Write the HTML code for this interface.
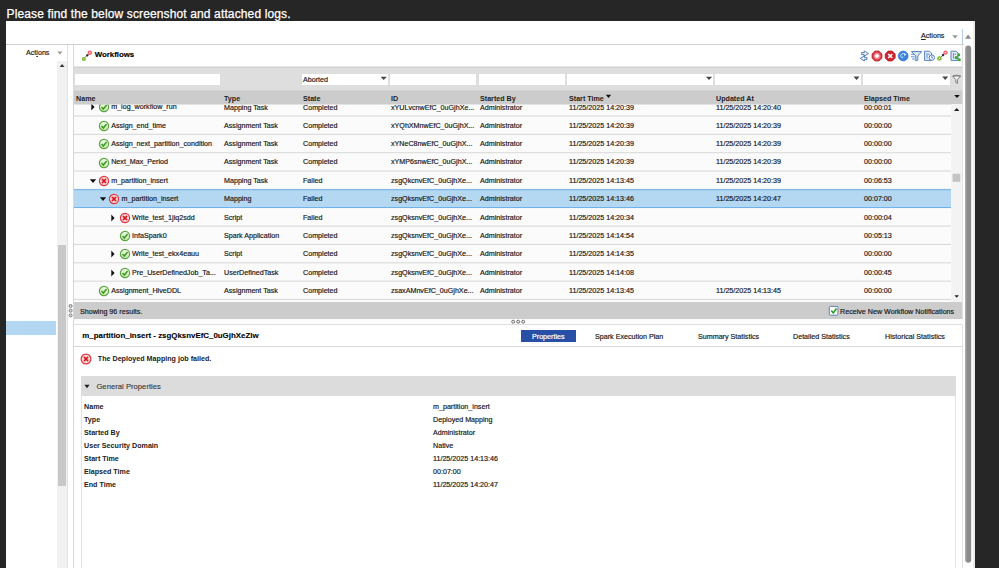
<!DOCTYPE html>
<html><head><meta charset="utf-8">
<style>
*{box-sizing:border-box;margin:0;padding:0}
html,body{width:999px;height:568px;overflow:hidden;background:#262626;font-family:"Liberation Sans",Arial,sans-serif;font-size:8px;color:#222}
.a{position:absolute}
#title{left:6.5px;top:6.5px;color:#fff;font-size:12px;line-height:14px;font-family:"Liberation Sans",sans-serif;white-space:nowrap;letter-spacing:0.13px;-webkit-text-stroke:0.25px #fff}
#panel{left:6px;top:21px;width:969px;height:547px;background:#fff}
.t{position:absolute;white-space:nowrap;font-size:7.15px;line-height:10px;color:#151515;-webkit-text-stroke:0.18px #222}
.b{font-weight:bold;-webkit-text-stroke:0;color:#222}
.row{position:absolute;left:75px;width:876px;height:18.3px;background:#fafafa;border-bottom:1px solid #dedede}
.inp{position:absolute;background:#fff;height:11px;top:74px}
</style></head><body>
<div class="a" id="title">Please find the below screenshot and attached logs.</div>
<div class="a" id="panel"></div>

<!-- top bar -->
<div class="a" style="left:6px;top:44px;width:958px;height:1px;background:#cfcfcf"></div>
<div class="t" style="left:921px;top:31px"><u>A</u>ctions</div>
<svg class="a" style="left:951px;top:34px" width="8" height="6" viewBox="0 0 8 6"><path d="M1.2 1.3 L6.8 1.3 L4 4.5 Z" fill="#999"/></svg>
<div class="a" style="left:962.4px;top:29px;width:1px;height:15px;background:#b8cbe6"></div>

<!-- right scrollbar -->
<div class="a" style="left:962.3px;top:45px;width:1px;height:523px;background:#e2e2e2"></div>
<div class="a" style="left:973px;top:21px;width:2px;height:547px;background:#ececec"></div>
<svg class="a" style="left:960px;top:40px" width="16" height="528"><defs><linearGradient id="tg" x1="0" y1="0" x2="1" y2="0"><stop offset="0" stop-color="#a6a6a6"/><stop offset="0.4" stop-color="#8c8c8c"/><stop offset="1" stop-color="#8a8a8a"/></linearGradient></defs><rect x="5.1" y="5.6" width="6.1" height="517.2" rx="3" fill="url(#tg)"/></svg>
<svg class="a" style="left:964px;top:33px" width="9" height="7" viewBox="0 0 9 7"><path d="M1 5.8 L4.1 1.4 L7.2 5.8 Z" fill="#8c8c8c"/></svg>

<!-- left panel -->
<div class="t" style="left:26px;top:48px">Act<u>i</u>ons</div>
<svg class="a" style="left:56px;top:50px" width="8" height="6" viewBox="0 0 8 6"><path d="M1.3 1.4 L6.5 1.4 L3.9 4.6 Z" fill="#999"/></svg>
<div class="a" style="left:57px;top:61px;width:10.3px;height:507px;background:#f1f1f1"></div>
<svg class="a" style="left:58px;top:63px" width="8" height="6" viewBox="0 0 8 6"><path d="M1.7 3.9 L6.5 3.9 L4.1 1.1 Z" fill="#333"/></svg>
<div class="a" style="left:58.2px;top:245px;width:7.6px;height:241px;background:#c8c8c8"></div>
<div class="a" style="left:6px;top:321px;width:50px;height:14px;background:#b3d7f3"></div>
<div class="a" style="left:67.3px;top:45px;width:1px;height:523px;background:#e2e2e2"></div>
<div class="a" style="left:73.4px;top:45px;width:1px;height:523px;background:#d8d8d8"></div>

<!-- workflows header -->
<div class="t b" style="left:94.7px;top:50px;font-size:7.85px;color:#000;-webkit-text-stroke:0.15px #000">Workflows</div>


<!-- workflows icon -->
<svg class="a" style="left:80px;top:49px" width="14" height="14" viewBox="0 0 14 14"><path d="M4.8 8.8 L8.6 5" stroke="#666" stroke-width="1"/><path d="M7.3 4.9 L8.7 6.3 L7.3 7.7 L5.9 6.3 Z" fill="#222"/><circle cx="3.8" cy="9.9" r="2" fill="#7db52e"/><circle cx="3.8" cy="9.9" r="0.7" fill="#d9efb8"/><circle cx="9.8" cy="3.8" r="2.2" fill="#f8656e"/><circle cx="9.8" cy="3.8" r="0.7" fill="#fde0e2"/></svg>
<!-- toolbar icons -->
<svg class="a" style="left:858px;top:49px" width="106" height="14" viewBox="0 0 106 14">
 <defs><radialGradient id="rg1" cx="0.5" cy="0.5" r="0.5"><stop offset="0.35" stop-color="#f6b0b6"/><stop offset="0.75" stop-color="#dc4652"/><stop offset="1" stop-color="#c8303c"/></radialGradient></defs>
 <g fill="#eef4fc" stroke="#4474b6" stroke-width="0.9" stroke-linejoin="round"><path d="M3.6 3.6 L6.2 3.6 L6.2 2 L10.4 4.6 L6.2 7.2 L6.2 5.6 L3.6 5.6 Z"/><path d="M9 8.4 L6.4 8.4 L6.4 6.8 L2.2 9.4 L6.4 12 L6.4 10.4 L9 10.4 Z"/></g>
 <path d="M16.9 2 L21.1 2 L24 4.9 L24 9.1 L21.1 12 L16.9 12 L14 9.1 L14 4.9 Z" fill="url(#rg1)" stroke="#c02834" stroke-width="0.7"/><rect x="17.4" y="5.4" width="3.2" height="3.2" rx="0.8" fill="#fff"/>
 <path d="M30.1 2 L34.3 2 L37.2 4.9 L37.2 9.1 L34.3 12 L30.1 12 L27.2 9.1 L27.2 4.9 Z" fill="#cc2430" stroke="#b41824" stroke-width="0.7"/><path d="M30.2 5 L34.2 9 M34.2 5 L30.2 9" stroke="#fff" stroke-width="1.7"/>
 <circle cx="45.2" cy="7" r="4.9" fill="#3a84de" stroke="#2e74cc" stroke-width="0.7"/><path d="M42.8 8 A2.6 2.6 0 0 1 47.2 5.4" fill="none" stroke="#cfe2fb" stroke-width="1"/><path d="M45.8 4.6 L48.4 5 L46.6 7.2 Z" fill="#e4f0ff"/><path d="M43 8.6 L45.8 7 L44.2 9.4 Z" fill="#cfe2fb"/>
 <g stroke="#3d6fb8" stroke-width="0.9" fill="#dce8f8" stroke-linejoin="round"><path d="M53.4 2.6 L63.6 2.6 L59.8 7 L59.8 11 L57.8 12 L57.8 7 Z"/><path d="M53 5.4 L56 5.4 M53 7.8 L56.8 7.8 M54 10 L57 10" fill="none" stroke="#4d86d6"/></g>
 <g stroke="#4474b6" stroke-width="0.9" fill="#e6eefa" stroke-linejoin="round"><path d="M66.6 2.2 L71.6 2.2 L73.6 4.2 L73.6 11.4 L66.6 11.4 Z"/><path d="M69 4 L69 9.6 M70.8 4.4 L70.8 6" fill="none" stroke-width="0.8"/><circle cx="73.8" cy="8.6" r="2.7" fill="#f4f8fe"/><path d="M73.8 7 L73.8 8.8 L75 8.8" fill="none" stroke-width="0.8"/></g>
 <path d="M82.6 8.4 L86.4 4.6" stroke="#666" stroke-width="1"/><path d="M85.1 4.6 L86.5 6 L85.1 7.4 L83.7 6 Z" fill="#222"/><circle cx="81.4" cy="9.4" r="2.2" fill="#78b22a"/><circle cx="81.4" cy="9.4" r="0.8" fill="#e0f2c4"/><circle cx="87.5" cy="3.6" r="2.2" fill="#f8626c"/><circle cx="87.5" cy="3.6" r="0.8" fill="#fde0e2"/>
 <g stroke="#4474b6" stroke-width="0.9" fill="#e6eefa" stroke-linejoin="round"><path d="M93 2.2 L98 2.2 L100 4.2 L100 11.4 L93 11.4 Z"/><path d="M95.4 4 L95.4 9.6 M97.2 4.4 L97.2 6" fill="none" stroke-width="0.8"/></g>
 <g fill="#3aa832"><path d="M98.2 8.6 L100.8 5.8 M98.2 8.6 L101.4 10.8" stroke="#3aa832" stroke-width="0.9"/><circle cx="98.2" cy="8.6" r="1.6"/><circle cx="100.8" cy="5.7" r="1.5"/><circle cx="101.4" cy="10.8" r="1.5"/></g>
</svg>
<div class="a" style="left:74px;top:100px;width:888.3px;height:203px;overflow:hidden;background:#fbfbfb"></div>
<div class="a" id="clip" style="left:0;top:100px;width:999px;height:203px;overflow:hidden"><div class="a" style="left:0;top:-100px;width:999px;height:568px">
<svg class="a" style="left:0;top:0" width="999" height="568"><defs><linearGradient id="gg" x1="0" y1="0" x2="0" y2="1"><stop offset="0" stop-color="#f4fbef"/><stop offset="1" stop-color="#c4e8a8"/></linearGradient></defs><rect x="74" y="115.45" width="877" height="1.1" fill="#dadada"/><rect x="74" y="133.80" width="877" height="1.1" fill="#dadada"/><rect x="74" y="152.15" width="877" height="1.1" fill="#dadada"/><rect x="74" y="170.50" width="877" height="1.1" fill="#dadada"/><rect x="74" y="188.85" width="877" height="1.1" fill="#dadada"/><rect x="74" y="189.20" width="877" height="18.85" fill="#6cb0ea"/><rect x="74" y="190.20" width="877" height="16.85" fill="#b4d8f2"/><rect x="74" y="225.55" width="877" height="1.1" fill="#dadada"/><rect x="74" y="243.90" width="877" height="1.1" fill="#dadada"/><rect x="74" y="262.25" width="877" height="1.1" fill="#dadada"/><rect x="74" y="280.60" width="877" height="1.1" fill="#dadada"/><rect x="74" y="298.95" width="877" height="1.1" fill="#dadada"/></svg>
<svg class="a" style="left:97.60px;top:100.85px" width="12" height="12" viewBox="0 0 12 12"><circle cx="6" cy="6" r="4.6" fill="url(#gg)" stroke="#5aa63e" stroke-width="1.2"/><path d="M3.5 6.1 L5.3 8 L8.6 4" fill="none" stroke="#3c9a22" stroke-width="1.5"/></svg>
<svg class="a" style="left:89.5px;top:102.85000000000001px" width="6" height="8" viewBox="0 0 6 8"><path d="M1.3 0.6 L4.6 4 L1.3 7.4 Z" fill="#111"/></svg>
<div class="t" style="left:111.2px;top:101.7px">m_log_workflow_run</div>
<div class="t" style="left:224px;top:102.6px">Mapping Task</div>
<div class="t" style="left:303px;top:102.6px">Completed</div>
<div class="t" style="left:391px;top:102.6px">xYULvcnwEfC_0uGjhXe...</div>
<div class="t" style="left:480px;top:102.6px">Administrator</div>
<div class="t" style="left:569px;top:102.6px">11/25/2025 14:20:39</div>
<div class="t" style="left:716px;top:102.6px">11/25/2025 14:20:40</div>
<div class="t" style="left:864px;top:102.6px">00:00:01</div>
<svg class="a" style="left:97.60px;top:119.90px" width="12" height="12" viewBox="0 0 12 12"><circle cx="6" cy="6" r="4.6" fill="url(#gg)" stroke="#5aa63e" stroke-width="1.2"/><path d="M3.5 6.1 L5.3 8 L8.6 4" fill="none" stroke="#3c9a22" stroke-width="1.5"/></svg>
<div class="t" style="left:111.2px;top:120.7px">Assign_end_time</div>
<div class="t" style="left:224px;top:120.7px">Assignment Task</div>
<div class="t" style="left:303px;top:120.7px">Completed</div>
<div class="t" style="left:391px;top:120.7px">xYQhXMnwEfC_0uGjhX...</div>
<div class="t" style="left:480px;top:120.7px">Administrator</div>
<div class="t" style="left:569px;top:120.7px">11/25/2025 14:20:39</div>
<div class="t" style="left:716px;top:120.7px">11/25/2025 14:20:39</div>
<div class="t" style="left:864px;top:120.7px">00:00:00</div>
<svg class="a" style="left:97.60px;top:138.25px" width="12" height="12" viewBox="0 0 12 12"><circle cx="6" cy="6" r="4.6" fill="url(#gg)" stroke="#5aa63e" stroke-width="1.2"/><path d="M3.5 6.1 L5.3 8 L8.6 4" fill="none" stroke="#3c9a22" stroke-width="1.5"/></svg>
<div class="t" style="left:111.2px;top:139.1px">Assign_next_partition_condition</div>
<div class="t" style="left:224px;top:139.1px">Assignment Task</div>
<div class="t" style="left:303px;top:139.1px">Completed</div>
<div class="t" style="left:391px;top:139.1px">xYNeC8nwEfC_0uGjhX...</div>
<div class="t" style="left:480px;top:139.1px">Administrator</div>
<div class="t" style="left:569px;top:139.1px">11/25/2025 14:20:39</div>
<div class="t" style="left:716px;top:139.1px">11/25/2025 14:20:39</div>
<div class="t" style="left:864px;top:139.1px">00:00:00</div>
<svg class="a" style="left:97.60px;top:156.60px" width="12" height="12" viewBox="0 0 12 12"><circle cx="6" cy="6" r="4.6" fill="url(#gg)" stroke="#5aa63e" stroke-width="1.2"/><path d="M3.5 6.1 L5.3 8 L8.6 4" fill="none" stroke="#3c9a22" stroke-width="1.5"/></svg>
<div class="t" style="left:111.2px;top:157.4px">Next_Max_Period</div>
<div class="t" style="left:224px;top:157.4px">Assignment Task</div>
<div class="t" style="left:303px;top:157.4px">Completed</div>
<div class="t" style="left:391px;top:157.4px">xYMP6snwEfC_0uGjhX...</div>
<div class="t" style="left:480px;top:157.4px">Administrator</div>
<div class="t" style="left:569px;top:157.4px">11/25/2025 14:20:39</div>
<div class="t" style="left:716px;top:157.4px">11/25/2025 14:20:39</div>
<div class="t" style="left:864px;top:157.4px">00:00:00</div>
<svg class="a" style="left:97.60px;top:174.95px" width="12" height="12" viewBox="0 0 12 12"><circle cx="6" cy="6" r="4.6" fill="#f8cfcf" stroke="#dc3a42" stroke-width="1.2"/><path d="M4 4 L8 8 M8 4 L4 8" fill="none" stroke="#d4121a" stroke-width="1.7"/></svg>
<svg class="a" style="left:88.5px;top:177.95000000000002px" width="8" height="6" viewBox="0 0 8 6"><path d="M0.8 1.2 L7.2 1.2 L4 5 Z" fill="#111"/></svg>
<div class="t" style="left:111.2px;top:175.8px">m_partition_insert</div>
<div class="t" style="left:224px;top:175.8px">Mapping Task</div>
<div class="t" style="left:303px;top:175.8px">Failed</div>
<div class="t" style="left:391px;top:175.8px">zsgQkcnvEfC_0uGjhXe...</div>
<div class="t" style="left:480px;top:175.8px">Administrator</div>
<div class="t" style="left:569px;top:175.8px">11/25/2025 14:13:45</div>
<div class="t" style="left:716px;top:175.8px">11/25/2025 14:20:39</div>
<div class="t" style="left:864px;top:175.8px">00:06:53</div>
<svg class="a" style="left:108.00px;top:193.30px" width="12" height="12" viewBox="0 0 12 12"><circle cx="6" cy="6" r="4.6" fill="#f8cfcf" stroke="#dc3a42" stroke-width="1.2"/><path d="M4 4 L8 8 M8 4 L4 8" fill="none" stroke="#d4121a" stroke-width="1.7"/></svg>
<svg class="a" style="left:98.9px;top:196.3px" width="8" height="6" viewBox="0 0 8 6"><path d="M0.8 1.2 L7.2 1.2 L4 5 Z" fill="#111"/></svg>
<div class="t" style="left:121.6px;top:194.1px">m_partition_insert</div>
<div class="t" style="left:224px;top:194.1px">Mapping</div>
<div class="t" style="left:303px;top:194.1px">Failed</div>
<div class="t" style="left:391px;top:194.1px">zsgQksnvEfC_0uGjhXe...</div>
<div class="t" style="left:480px;top:194.1px">Administrator</div>
<div class="t" style="left:569px;top:194.1px">11/25/2025 14:13:46</div>
<div class="t" style="left:716px;top:194.1px">11/25/2025 14:20:47</div>
<div class="t" style="left:864px;top:194.1px">00:07:00</div>
<svg class="a" style="left:118.50px;top:211.65px" width="12" height="12" viewBox="0 0 12 12"><circle cx="6" cy="6" r="4.6" fill="#f8cfcf" stroke="#dc3a42" stroke-width="1.2"/><path d="M4 4 L8 8 M8 4 L4 8" fill="none" stroke="#d4121a" stroke-width="1.7"/></svg>
<svg class="a" style="left:110.4px;top:213.65px" width="6" height="8" viewBox="0 0 6 8"><path d="M1.3 0.6 L4.6 4 L1.3 7.4 Z" fill="#111"/></svg>
<div class="t" style="left:132.1px;top:212.5px">Write_test_1jiq2sdd</div>
<div class="t" style="left:224px;top:212.5px">Script</div>
<div class="t" style="left:303px;top:212.5px">Failed</div>
<div class="t" style="left:391px;top:212.5px">zsgQksnvEfC_0uGjhXe...</div>
<div class="t" style="left:480px;top:212.5px">Administrator</div>
<div class="t" style="left:569px;top:212.5px">11/25/2025 14:20:34</div>
<div class="t" style="left:864px;top:212.5px">00:00:04</div>
<svg class="a" style="left:118.50px;top:230.00px" width="12" height="12" viewBox="0 0 12 12"><circle cx="6" cy="6" r="4.6" fill="url(#gg)" stroke="#5aa63e" stroke-width="1.2"/><path d="M3.5 6.1 L5.3 8 L8.6 4" fill="none" stroke="#3c9a22" stroke-width="1.5"/></svg>
<div class="t" style="left:132.1px;top:230.8px">InfaSpark0</div>
<div class="t" style="left:224px;top:230.8px">Spark Application</div>
<div class="t" style="left:303px;top:230.8px">Completed</div>
<div class="t" style="left:391px;top:230.8px">zsgQksnvEfC_0uGjhXe...</div>
<div class="t" style="left:480px;top:230.8px">Administrator</div>
<div class="t" style="left:569px;top:230.8px">11/25/2025 14:14:54</div>
<div class="t" style="left:864px;top:230.8px">00:05:13</div>
<svg class="a" style="left:118.50px;top:248.35px" width="12" height="12" viewBox="0 0 12 12"><circle cx="6" cy="6" r="4.6" fill="url(#gg)" stroke="#5aa63e" stroke-width="1.2"/><path d="M3.5 6.1 L5.3 8 L8.6 4" fill="none" stroke="#3c9a22" stroke-width="1.5"/></svg>
<svg class="a" style="left:110.4px;top:250.35000000000002px" width="6" height="8" viewBox="0 0 6 8"><path d="M1.3 0.6 L4.6 4 L1.3 7.4 Z" fill="#111"/></svg>
<div class="t" style="left:132.1px;top:249.2px">Write_test_ekx4eauu</div>
<div class="t" style="left:224px;top:249.2px">Script</div>
<div class="t" style="left:303px;top:249.2px">Completed</div>
<div class="t" style="left:391px;top:249.2px">zsgQksnvEfC_0uGjhXe...</div>
<div class="t" style="left:480px;top:249.2px">Administrator</div>
<div class="t" style="left:569px;top:249.2px">11/25/2025 14:14:35</div>
<div class="t" style="left:864px;top:249.2px">00:00:00</div>
<svg class="a" style="left:118.50px;top:266.70px" width="12" height="12" viewBox="0 0 12 12"><circle cx="6" cy="6" r="4.6" fill="url(#gg)" stroke="#5aa63e" stroke-width="1.2"/><path d="M3.5 6.1 L5.3 8 L8.6 4" fill="none" stroke="#3c9a22" stroke-width="1.5"/></svg>
<svg class="a" style="left:110.4px;top:268.7px" width="6" height="8" viewBox="0 0 6 8"><path d="M1.3 0.6 L4.6 4 L1.3 7.4 Z" fill="#111"/></svg>
<div class="t" style="left:132.1px;top:267.5px">Pre_UserDefinedJob_Ta...</div>
<div class="t" style="left:224px;top:267.5px">UserDefinedTask</div>
<div class="t" style="left:303px;top:267.5px">Completed</div>
<div class="t" style="left:391px;top:267.5px">zsgQksnvEfC_0uGjhXe...</div>
<div class="t" style="left:480px;top:267.5px">Administrator</div>
<div class="t" style="left:569px;top:267.5px">11/25/2025 14:14:08</div>
<div class="t" style="left:864px;top:267.5px">00:00:45</div>
<svg class="a" style="left:97.60px;top:285.05px" width="12" height="12" viewBox="0 0 12 12"><circle cx="6" cy="6" r="4.6" fill="url(#gg)" stroke="#5aa63e" stroke-width="1.2"/><path d="M3.5 6.1 L5.3 8 L8.6 4" fill="none" stroke="#3c9a22" stroke-width="1.5"/></svg>
<div class="t" style="left:111.2px;top:285.8px">Assignment_HiveDDL</div>
<div class="t" style="left:224px;top:285.8px">Assignment Task</div>
<div class="t" style="left:303px;top:285.8px">Completed</div>
<div class="t" style="left:391px;top:285.8px">zsaxAMnvEfC_0uGjhXe...</div>
<div class="t" style="left:480px;top:285.8px">Administrator</div>
<div class="t" style="left:569px;top:285.8px">11/25/2025 14:13:45</div>
<div class="t" style="left:716px;top:285.8px">11/25/2025 14:13:45</div>
<div class="t" style="left:864px;top:285.8px">00:00:00</div>
</div></div>
<!-- filter strip -->
<svg class="a" style="left:74px;top:60px" width="889" height="50"><rect x="0" y="6.5" width="888.3" height="24.5" fill="#dedede"/><rect x="0" y="6.7" width="888.3" height="1" fill="#d2d2d2"/><rect x="0" y="30.5" width="888.3" height="14" fill="#cccccc"/></svg>

<div class="inp" style="left:75.3px;width:144.7px"></div>
<div class="inp" style="left:301.5px;width:86px"></div>
<div class="inp" style="left:390px;width:86px"></div>
<div class="inp" style="left:479px;width:86px"></div>
<div class="inp" style="left:567px;width:146px"></div>
<div class="inp" style="left:715px;width:146px"></div>
<div class="inp" style="left:863px;width:87px"></div>
<div class="t" style="left:303px;top:74.6px">Aborted</div>

<!-- table header -->
<div class="t b" style="left:76px;top:94px">Name</div>
<div class="t b" style="left:224px;top:94px">Type</div>
<div class="t b" style="left:303px;top:94px">State</div>
<div class="t b" style="left:391px;top:94px">ID</div>
<div class="t b" style="left:480px;top:94px">Started By</div>
<div class="t b" style="left:569px;top:94px">Start Time</div>
<div class="t b" style="left:716px;top:94px">Updated At</div>
<div class="t b" style="left:864px;top:94px">Elapsed Time</div>



<!-- footer -->
<div class="a" style="left:74px;top:302px;width:888.3px;height:16.5px;background:#cccccc"></div>
<div class="t" style="left:80px;top:306.6px">Showing 96 results.</div>
<div class="t" style="left:840px;top:306.6px">Receive New Workflow Notifications</div>


<!-- splitters -->
<div class="a" style="left:74px;top:318.5px;width:889px;height:6px;background:#fcfcfc"></div>
<div class="a" style="left:74px;top:324.2px;width:888.3px;height:1px;background:#dedede"></div>
<svg class="a" style="left:510px;top:318px" width="18" height="7" viewBox="0 0 18 7"><g fill="#e8e8e8" stroke="#666" stroke-width="0.9"><circle cx="3.2" cy="3.7" r="1.5"/><circle cx="8.2" cy="3.7" r="1.5"/><circle cx="13.2" cy="3.7" r="1.5"/></g></svg>
<svg class="a" style="left:66.5px;top:302px" width="7" height="18" viewBox="0 0 7 18"><g fill="#e8e8e8" stroke="#666" stroke-width="0.9"><circle cx="3.6" cy="4" r="1.5"/><circle cx="3.6" cy="8.7" r="1.5"/><circle cx="3.6" cy="13.4" r="1.5"/></g></svg>
<!-- detail -->
<div class="t b" style="left:82.3px;top:331.4px;font-size:7.9px;color:#000;-webkit-text-stroke:0.1px #000">m_partition_insert - zsgQksnvEfC_0uGjhXeZlw</div>
<div class="a" style="left:521px;top:329.6px;width:55px;height:12.6px;background:#264fa5"></div>
<div class="t" style="left:532px;top:331.6px;color:#fff;-webkit-text-stroke:0.2px #fff">Properties</div>
<div class="t" style="left:595px;top:331.6px">Spark Execution Plan</div>
<div class="t" style="left:698px;top:331.6px">Summary Statistics</div>
<div class="t" style="left:793px;top:331.6px">Detailed Statistics</div>
<div class="t" style="left:885px;top:331.6px">Historical Statistics</div>
<div class="a" style="left:74px;top:346.4px;width:888.3px;height:1px;background:#d8d8d8"></div>
<div class="t b" style="left:97.8px;top:353.6px">The Deployed Mapping job failed.</div>
<div class="a" style="left:80.8px;top:375.8px;width:875.4px;height:19.8px;background:#dcdcdc"></div>
<div class="a" style="left:80.6px;top:395px;width:1px;height:173px;background:#e4e4e4"></div>
<div class="a" style="left:955.4px;top:395px;width:1px;height:173px;background:#e4e4e4"></div>
<div class="t" style="left:96.4px;top:382px;font-size:7.7px;-webkit-text-stroke:0.1px #333;color:#333">General Properties</div>
<svg class="a" style="left:84px;top:384px" width="6" height="5" viewBox="0 0 6 5"><path d="M0.4 0.8 L5.6 0.8 L3 4.2 Z" fill="#222"/></svg>
<svg class="a" style="left:79.8px;top:353px" width="12" height="12" viewBox="0 0 12 12"><circle cx="6" cy="6" r="4.9" fill="#f8cfcf" stroke="#dc3a42" stroke-width="1.2"/><path d="M4 4 L8 8 M8 4 L4 8" fill="none" stroke="#d4121a" stroke-width="1.7"/></svg>

<div class="t b" style="left:84px;top:402px">Name</div><div class="t" style="left:433px;top:402px">m_partition_insert</div>
<div class="t b" style="left:84px;top:415px">Type</div><div class="t" style="left:433px;top:415px">Deployed Mapping</div>
<div class="t b" style="left:84px;top:428px">Started By</div><div class="t" style="left:433px;top:428px">Administrator</div>
<div class="t b" style="left:84px;top:441px">User Security Domain</div><div class="t" style="left:433px;top:441px">Native</div>
<div class="t b" style="left:84px;top:454px">Start Time</div><div class="t" style="left:433px;top:454px">11/25/2025 14:13:46</div>
<div class="t b" style="left:84px;top:467px">Elapsed Time</div><div class="t" style="left:433px;top:467px">00:07:00</div>
<div class="t b" style="left:84px;top:480px">End Time</div><div class="t" style="left:433px;top:480px">11/25/2025 14:20:47</div>
<svg class="a" style="left:0;top:0" width="999" height="568">
<rect x="951.2" y="104" width="11" height="198" fill="#f3f3f3"/>
<path d="M380.6 76.7 L386.8 76.7 L383.7 80.1 Z" fill="#444"/>
<path d="M705.9 76.7 L712.1 76.7 L709 80.1 Z" fill="#444"/>
<path d="M853.5 76.6 L859.5 76.6 L856.5 80.0 Z" fill="#444"/>
<path d="M942.2 76.6 L948.2 76.6 L945.2 80.0 Z" fill="#444"/>
<path d="M605.8 94.8 L611.2 94.8 L608.5 98.0 Z" fill="#111"/>
<path d="M954.2 94.9 L959.8 94.9 L957.0 98.1 Z" fill="#111"/>
<path d="M954.0 111.0 L959.4 111.0 L956.7 108.0 Z" fill="#222"/>
<path d="M954.5 295.2 L958.9 295.2 L956.7 297.8 Z" fill="#222"/>
<rect x="952.6" y="173.8" width="7.6" height="8" fill="#c4c4c4"/><rect x="829.3" y="306.4" width="8.6" height="8.8" rx="1" fill="#fff" stroke="#5c84b6" stroke-width="1"/><path d="M831.3 310.6 L833.3 312.9 L836.4 308.5" fill="none" stroke="#27a027" stroke-width="1.6"/>
<path d="M952.6 76 L960.6 76 L957.4 79.6 L957.4 83.4 L955.8 82.4 L955.8 79.6 Z" fill="#f4f4f4" stroke="#666" stroke-width="0.8"/><path d="M953 76 Q956.6 74.4 960.4 76" fill="none" stroke="#666" stroke-width="0.7"/>
</svg>

</body></html>
